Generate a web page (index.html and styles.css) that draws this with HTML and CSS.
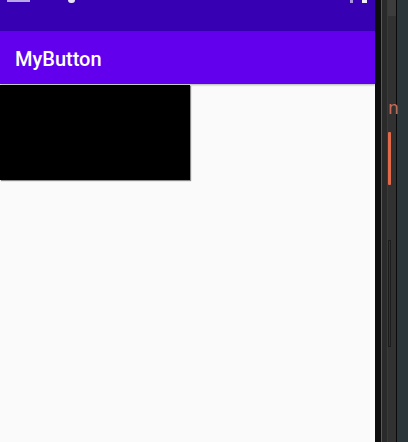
FILE: index.html
```html
<!DOCTYPE html>
<html>
<head>
<meta charset="utf-8">
<link rel="stylesheet" href="styles.css">
</head>
<body>
<div class="frame">
  <div class="screen">
    <div class="status">
      <span class="clock"></span>
      <span class="dot"></span>
      <span class="sig"></span>
      <span class="bat"></span>
    </div>
    <div class="appbar"><span class="title">MyButton</span></div>
    <div class="content">
      <div class="blackbox"></div>
    </div>
  </div>
  <div class="edge"></div>
  <div class="panel">
    <div class="line1"></div>
    <div class="rail"></div>
    <div class="track">
      <div class="tracktop"></div>
      <span class="glyph">n</span>
      <div class="thumb"></div>
      <div class="outline"></div>
    </div>
  </div>
  <div class="divider"></div>
  <div class="slate"></div>
</div>
</body>
</html>
```

FILE: styles.css
```css
html, body {
  margin: 0;
  padding: 0;
  width: 408px;
  height: 442px;
  overflow: hidden;
  background: #2b363b;
}
.frame {
  display: flex;
  width: 408px;
  height: 442px;
}
.screen {
  width: 375px;
  display: flex;
  flex-direction: column;
  background: #fafafa;
}
.status {
  height: 31px;
  background: #3700b3;
  position: relative;
  flex: none;
}
.clock {
  position: absolute;
  left: 7px;
  top: 0;
  width: 23px;
  height: 2px;
  background: #b9a8e6;
}
.dot {
  position: absolute;
  left: 68px;
  top: 0;
  width: 7px;
  height: 3px;
  border-radius: 0 0 4px 4px;
  background: #e8e0f8;
}
.sig {
  position: absolute;
  left: 350px;
  top: 0;
  width: 3px;
  height: 3px;
  background: #a896e0;
}
.bat {
  position: absolute;
  left: 362px;
  top: 0;
  width: 5px;
  height: 3px;
  background: #f0ecfa;
}
.appbar {
  height: 53px;
  background: #6200ee;
  display: flex;
  align-items: center;
  padding-left: 15px;
  flex: none;
  box-shadow: 0 1px 2px rgba(0,0,0,0.3);
  position: relative;
  z-index: 1;
}
.title {
  font-family: Roboto, "Liberation Sans", sans-serif;
  font-weight: 500;
  font-size: 20px;
  color: #ffffff;
  padding-top: 3px;
}
.content {
  flex: 1;
  padding-top: 1px;
}
.blackbox {
  width: 190px;
  height: 95px;
  background: #000;
  box-shadow: 1px 1px 1px rgba(0,0,0,0.45);
}
.edge {
  width: 6px;
  background: #0d0d0d;
}
.panel {
  width: 15px;
  display: flex;
  background: #2b2b2b;
}
.line1 {
  width: 1px;
  background: #5a5a5a;
}
.rail {
  width: 6px;
  background: #2a2a2a;
  border-right: 1px solid #3a3a3a;
  box-sizing: border-box;
}
.track {
  flex: 1;
  position: relative;
  background: #313131;
}
.tracktop {
  height: 16px;
  background: #3d3d3d;
}
.glyph {
  position: absolute;
  left: 0;
  top: 100px;
  font-family: "DejaVu Sans", sans-serif;
  font-size: 17px;
  line-height: 17px;
  color: #c86a5c;
}
.thumb {
  position: absolute;
  left: 0;
  top: 132px;
  width: 3px;
  height: 53px;
  background: #e2694a;
  border-radius: 1px;
}
.outline {
  position: absolute;
  left: 0;
  top: 240px;
  width: 3px;
  height: 107px;
  border: 1px solid #1c1c1c;
  box-sizing: border-box;
}
.divider {
  width: 1px;
  background: #0a0a0a;
}
.slate {
  flex: 1;
  background: #2b363b;
}
```
